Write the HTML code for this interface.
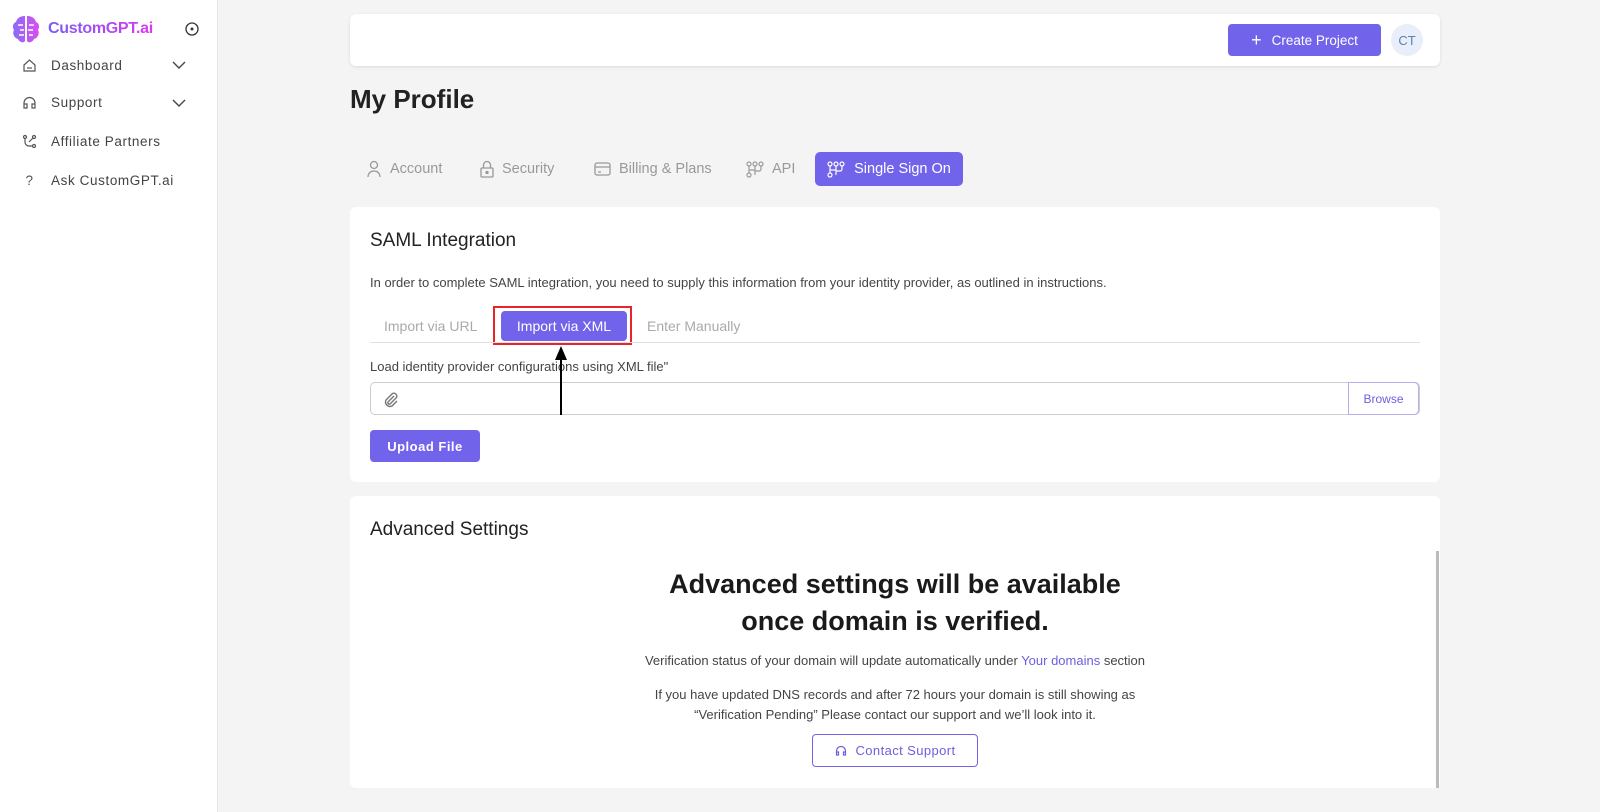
<!DOCTYPE html>
<html><head><meta charset="utf-8"><style>
*{box-sizing:border-box;margin:0;padding:0}
body{width:1600px;height:812px;overflow:hidden;background:#f4f4f4;font-family:"Liberation Sans",sans-serif;color:#222;position:relative}
.side{position:absolute;left:0;top:0;width:218px;height:812px;background:#fff;border-right:1px solid #e6e6e6}
.logo{position:absolute;left:10px;top:13px;display:flex;align-items:center}
.logo b{font-size:16px;margin-left:6px;background:linear-gradient(90deg,#7b5cf5,#d63cf0);-webkit-background-clip:text;color:transparent;letter-spacing:-0.3px}
.nav{position:absolute;left:22px;font-size:13.5px;color:#444;letter-spacing:0.6px;display:flex;align-items:center}
.nav svg{margin-right:14px}
.chev{position:absolute;left:172px}
.top{position:absolute;left:350px;top:14px;width:1090px;height:52px;background:#fff;border-radius:6px;box-shadow:0 1px 3px rgba(0,0,0,.1)}
.btn{background:#7163ea;color:#fff;border-radius:4px;font-size:13.5px;display:flex;align-items:center;justify-content:center}
.card{position:absolute;left:350px;width:1090px;background:#fff;border-radius:6px}
.tab{position:absolute;top:152px;height:34px;display:flex;align-items:center;font-size:14.5px;color:#999}
.tab svg{margin-right:8px}
</style></head><body>
<div class="side">
 <div class="logo"><svg width="32" height="32" viewBox="0 0 32 32"><defs><linearGradient id="g" x1="0" x2="1"><stop offset="0" stop-color="#8a6cf7"/><stop offset="1" stop-color="#d94ef0"/></linearGradient></defs><path d="M15 3C9 3 7 6 6 9 3 10 2 14 4 17 2 20 4 25 8 26 10 30 14 30 15 28ZM17 3C23 3 25 6 26 9 29 10 30 14 28 17 30 20 28 25 24 26 22 30 18 30 17 28Z" fill="url(#g)"/><path d="M8 12h5M10 17h4M9 22h5M19 12h5M18 17h5M19 22h4" stroke="#fff" stroke-width="1.6"/></svg><b>CustomGPT.ai</b></div>
 <svg style="position:absolute;left:185px;top:22px" width="14" height="14"><circle cx="7" cy="7" r="6" fill="none" stroke="#333" stroke-width="1.3"/><circle cx="7" cy="7" r="1.5" fill="#333"/></svg>
 <div class="nav" style="top:58px"><svg width="15" height="15" viewBox="0 0 15 15" fill="none" stroke="#555" stroke-width="1.2"><path d="M2 7l5.5-5 5.5 5v6H2z"/><path d="M5 10h5"/></svg>Dashboard</div>
 <svg class="chev" style="top:60px" width="14" height="10"><path d="M1 2l6 6 6-6" fill="none" stroke="#444" stroke-width="1.4"/></svg>
 <div class="nav" style="top:95px"><svg width="15" height="15" viewBox="0 0 15 15" fill="none" stroke="#555" stroke-width="1.2"><path d="M2 12V8a5.5 5.5 0 0111 0v4M2 9h3v4H2zM10 9h3v4h-3z"/></svg>Support</div>
 <svg class="chev" style="top:98px" width="14" height="10"><path d="M1 2l6 6 6-6" fill="none" stroke="#444" stroke-width="1.4"/></svg>
 <div class="nav" style="top:134px"><svg width="15" height="15" viewBox="0 0 15 15" fill="none" stroke="#555" stroke-width="1.2"><circle cx="3" cy="3" r="1.5"/><circle cx="12" cy="3" r="1.5"/><circle cx="12" cy="12" r="1.5"/><path d="M3 5v3a4 4 0 004 4h3M11 4l-4 4"/></svg>Affiliate Partners</div>
 <div class="nav" style="top:173px"><span style="width:15px;margin-right:14px;text-align:center;color:#555">?</span>Ask CustomGPT.ai</div>
</div>
<div class="top">
 <div class="btn" style="position:absolute;left:878px;top:10px;width:153px;height:32px"><span style="font-size:18px;margin-right:10px;font-weight:300">+</span>Create Project</div>
 <div style="position:absolute;left:1041px;top:10px;width:32px;height:32px;border-radius:50%;background:#e8effa;color:#5f7fb0;font-size:13px;display:flex;align-items:center;justify-content:center">CT</div>
</div>
<div style="position:absolute;left:350px;top:84px;font-size:26px;font-weight:bold;color:#222">My Profile</div>
<div class="tab" style="left:366px"><svg width="16" height="18" fill="none" stroke="#999" stroke-width="1.3"><circle cx="8" cy="5" r="3.5"/><path d="M2 17c0-4 3-6 6-6s6 2 6 6"/></svg>Account</div>
<div class="tab" style="left:480px"><svg width="14" height="18" fill="none" stroke="#999" stroke-width="1.3"><rect x="1" y="8" width="12" height="9" rx="1"/><path d="M3.5 8V5a3.5 3.5 0 017 0v3"/><circle cx="7" cy="12.5" r="1" fill="#999"/></svg>Security</div>
<div class="tab" style="left:594px"><svg width="17" height="14" fill="none" stroke="#999" stroke-width="1.3"><rect x="1" y="1" width="15" height="12" rx="2"/><path d="M1 5h15M4 10h3"/></svg>Billing &amp; Plans</div>
<div class="tab" style="left:746px"><svg width="18" height="17" fill="none" stroke="#999" stroke-width="1.2"><circle cx="3" cy="3" r="2"/><circle cx="9" cy="3" r="2"/><circle cx="15" cy="3" r="2"/><circle cx="3" cy="14" r="2"/><path d="M3 5v7M9 5v4H3M15 5v3a2 2 0 01-2 2H9v4"/></svg>API</div>
<div class="btn" style="position:absolute;left:815px;top:152px;width:148px;height:34px;font-size:14.5px;border-radius:5px"><svg width="18" height="17" fill="none" stroke="#fff" stroke-width="1.2" style="margin-right:9px"><circle cx="3" cy="3" r="2"/><circle cx="9" cy="3" r="2"/><circle cx="15" cy="3" r="2"/><circle cx="3" cy="14" r="2"/><path d="M3 5v7M9 5v4H3M15 5v3a2 2 0 01-2 2H9v4"/></svg>Single Sign On</div>

<div class="card" style="top:207px;height:275px">
 <div style="position:absolute;left:20px;top:23px;font-size:19px;color:#222">SAML Integration</div>
 <div style="position:absolute;left:20px;top:68px;font-size:13px;color:#444">In order to complete SAML integration, you need to supply this information from your identity provider, as outlined in instructions.</div>
 <div style="position:absolute;left:34px;top:111px;font-size:14px;color:#aaa">Import via URL</div>
 <div style="position:absolute;left:143px;top:99px;width:139px;height:39px;border:2px solid #e8232a"></div>
 <div class="btn" style="position:absolute;left:151px;top:104px;width:126px;height:30px;font-size:14px">Import via XML</div>
 <div style="position:absolute;left:297px;top:111px;font-size:14px;color:#aaa">Enter Manually</div>
 <div style="position:absolute;left:20px;top:135px;width:1050px;height:1px;background:#e2e2e2"></div>
 <div style="position:absolute;left:20px;top:152px;font-size:13px;color:#444">Load identity provider configurations using XML file"</div>
 <div style="position:absolute;left:20px;top:175px;width:1050px;height:33px;border:1px solid #ccc;border-radius:5px">
  <svg style="position:absolute;left:11px;top:8px" width="18" height="18" viewBox="0 0 18 18" fill="none" stroke="#777" stroke-width="1.4"><path d="M12 5l-6 6a1.5 1.5 0 002 2l6.5-6.5a3 3 0 00-4-4L4 9a4.5 4.5 0 006 6l5-5"/></svg>
  <div style="position:absolute;right:0;top:-1px;width:71px;height:33px;border:1px solid #b5aef0;border-radius:0 5px 5px 0;color:#6b5fe0;font-size:12px;display:flex;align-items:center;justify-content:center">Browse</div>
 </div>
 <div class="btn" style="position:absolute;left:20px;top:223px;width:110px;height:32px;font-size:13px;font-weight:bold;letter-spacing:.5px">Upload File</div>
 <div style="position:absolute;left:210px;top:150px;width:2px;height:58px;background:#000"></div>
 <svg style="position:absolute;left:205px;top:139px" width="12" height="14"><path d="M6 0L0 14h12z" fill="#000"/></svg>
</div>

<div class="card" style="top:496px;height:292px">
 <div style="position:absolute;left:20px;top:23px;font-size:19px;color:#222">Advanced Settings</div>
 <div style="position:absolute;left:0;width:1090px;top:70px;text-align:center;font-size:27px;font-weight:bold;line-height:37px;color:#1a1a1a">Advanced settings will be available<br>once domain is verified.</div>
 <div style="position:absolute;left:0;width:1090px;top:157px;text-align:center;font-size:13px;color:#444">Verification status of your domain will update automatically under <span style="color:#6b5fe0">Your domains</span> section</div>
 <div style="position:absolute;left:0;width:1090px;top:189px;text-align:center;font-size:13px;color:#444;line-height:20px">If you have updated DNS records and after 72 hours your domain is still showing as<br>“Verification Pending” Please contact our support and we’ll look into it.</div>
 <div style="position:absolute;left:462px;top:238px;width:166px;height:33px;border:1px solid #7163ea;border-radius:4px;color:#6b5fe0;font-size:13px;letter-spacing:.4px;display:flex;align-items:center;justify-content:center"><svg width="12" height="12" fill="none" stroke="#6b5fe0" stroke-width="1.2" style="margin-right:9px"><path d="M1.5 9V6a4.5 4.5 0 019 0v3M1.5 7h2v3h-2zM8.5 7h2v3h-2z"/></svg>Contact Support</div>
 <div style="position:absolute;left:1086px;top:55px;width:3px;height:237px;background:#bbb"></div>
</div>
</body></html>
